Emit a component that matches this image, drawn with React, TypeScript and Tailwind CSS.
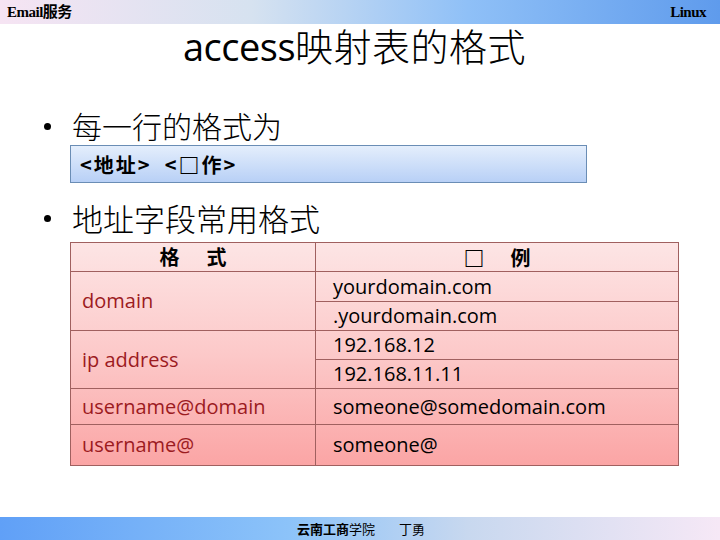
import React from "react";

const latin = { fontFamily: '"Open Sans", "Noto Sans CJK SC", sans-serif' };
const serif = { fontFamily: '"Liberation Serif", "Noto Sans CJK SC", serif' };
const cjk = { fontFamily: '"Noto Sans CJK SC", sans-serif' };

export default function App() {
  return (
    <div className="w-[720px] h-[540px] bg-white flex flex-col overflow-hidden">
      {/* top band */}
      <div
        className="h-[24px] shrink-0 flex items-center justify-between pl-[7px] pr-[14px] bg-[linear-gradient(90deg,#f6e4f3_0%,#d6e2f0_35%,#8fc0f7_65%,#5f9bec_100%)]"
        style={serif}
      >
        <span className="text-[15px] font-bold text-black leading-none tracking-[-0.5px]">Email服务</span>
        <span className="text-[15px] font-bold text-black leading-none tracking-[-0.5px]">Linux</span>
      </div>

      {/* title */}
      <div className="h-[38px] mt-[2px] pl-[183px] flex items-center">
        <span className="text-[38px] leading-none text-black whitespace-nowrap" style={latin}>
          <span className="tracking-[-0.5px]">access</span>
          <span style={cjk} className="font-light tracking-[0.5px]">映射表的格式</span>
        </span>
      </div>

      {/* bullet 1 */}
      <div className="mt-[43px] pl-[44px] flex items-center h-[36px]">
        <span className="w-[7px] h-[7px] rounded-full bg-black mr-[21px] mt-[2px]" />
        <span className="text-[30px] leading-none font-light text-black" style={cjk}>每一行的格式为</span>
      </div>

      {/* blue box */}
      <div className="ml-[70px] mt-[2px] w-[517px] h-[38px] border border-[#6a8db5] bg-[linear-gradient(180deg,#e4eefc_0%,#b8d0f6_100%)] flex items-center pl-[9px]">
        <span className="text-[20px] font-bold text-black leading-none tracking-[2px] whitespace-pre" style={cjk}>
          &lt;地址&gt;  &lt;<span className="text-[21px] font-black">□</span>作&gt;
        </span>
      </div>

      {/* bullet 2 */}
      <div className="mt-[14px] pl-[44px] flex items-center h-[40px]">
        <span className="w-[7px] h-[7px] rounded-full bg-black mr-[21px] mt-[2px]" />
        <span className="text-[31px] leading-none font-light text-black" style={cjk}>地址字段常用格式</span>
      </div>

      {/* table */}
      <div
        className="ml-[70px] mt-[5px] w-[609px] border border-[#a0605f] grid grid-cols-[245px_362px] grid-rows-[29px_30px_29px_29px_29px_36px_40px] bg-[linear-gradient(180deg,#fde5e5_0%,#fcc9c9_50%,#fba5a5_100%)] text-[20px]"
        style={latin}
      >
        <div className="col-start-1 row-start-1 border-r border-b border-[#a0605f] flex items-center justify-center">
          <span className="font-bold text-[20px] text-black leading-none tracking-[27px] pl-[27px]" style={cjk}>格式</span>
        </div>
        <div className="col-start-2 row-start-1 border-b border-[#a0605f] flex items-center justify-center">
          <span className="font-bold text-[20px] text-black leading-none tracking-[26px] pl-[26px]" style={cjk}>
            <span className="font-black text-[21px]">□</span>例
          </span>
        </div>

        <div className="col-start-1 row-start-2 row-span-2 border-r border-b border-[#a0605f] flex items-center pl-[11px] text-[#9c1b1f]">domain</div>
        <div className="col-start-1 row-start-4 row-span-2 border-r border-b border-[#a0605f] flex items-center pl-[11px] text-[#9c1b1f]">ip address</div>
        <div className="col-start-1 row-start-6 border-r border-b border-[#a0605f] flex items-center pl-[11px] text-[#9c1b1f]">username@domain</div>
        <div className="col-start-1 row-start-7 border-r border-[#a0605f] flex items-center pl-[11px] text-[#9c1b1f]">username@</div>

        <div className="col-start-2 row-start-2 border-b border-[#a0605f] flex items-center pl-[17px] text-black leading-none">yourdomain.com</div>
        <div className="col-start-2 row-start-3 border-b border-[#a0605f] flex items-center pl-[17px] text-black leading-none">.yourdomain.com</div>
        <div className="col-start-2 row-start-4 border-b border-[#a0605f] flex items-center pl-[17px] text-black leading-none">192.168.12</div>
        <div className="col-start-2 row-start-5 border-b border-[#a0605f] flex items-center pl-[17px] text-black leading-none">192.168.11.11</div>
        <div className="col-start-2 row-start-6 border-b border-[#a0605f] flex items-center pl-[17px] text-black">someone@somedomain.com</div>
        <div className="col-start-2 row-start-7 flex items-center pl-[17px] text-black">someone@</div>
      </div>

      <div className="flex-1" />

      {/* bottom band */}
      <div className="h-[23px] shrink-0 flex items-center justify-center bg-[linear-gradient(90deg,#60a0f7_0%,#8cc3f9_40%,#c8d8ef_65%,#f6e8f6_100%)]">
        <span className="text-[13px] leading-none text-black ml-[2px]" style={cjk}>
          <span className="font-bold">云南工商</span>学院
          <span className="ml-[24px]">丁勇</span>
        </span>
      </div>
    </div>
  );
}
